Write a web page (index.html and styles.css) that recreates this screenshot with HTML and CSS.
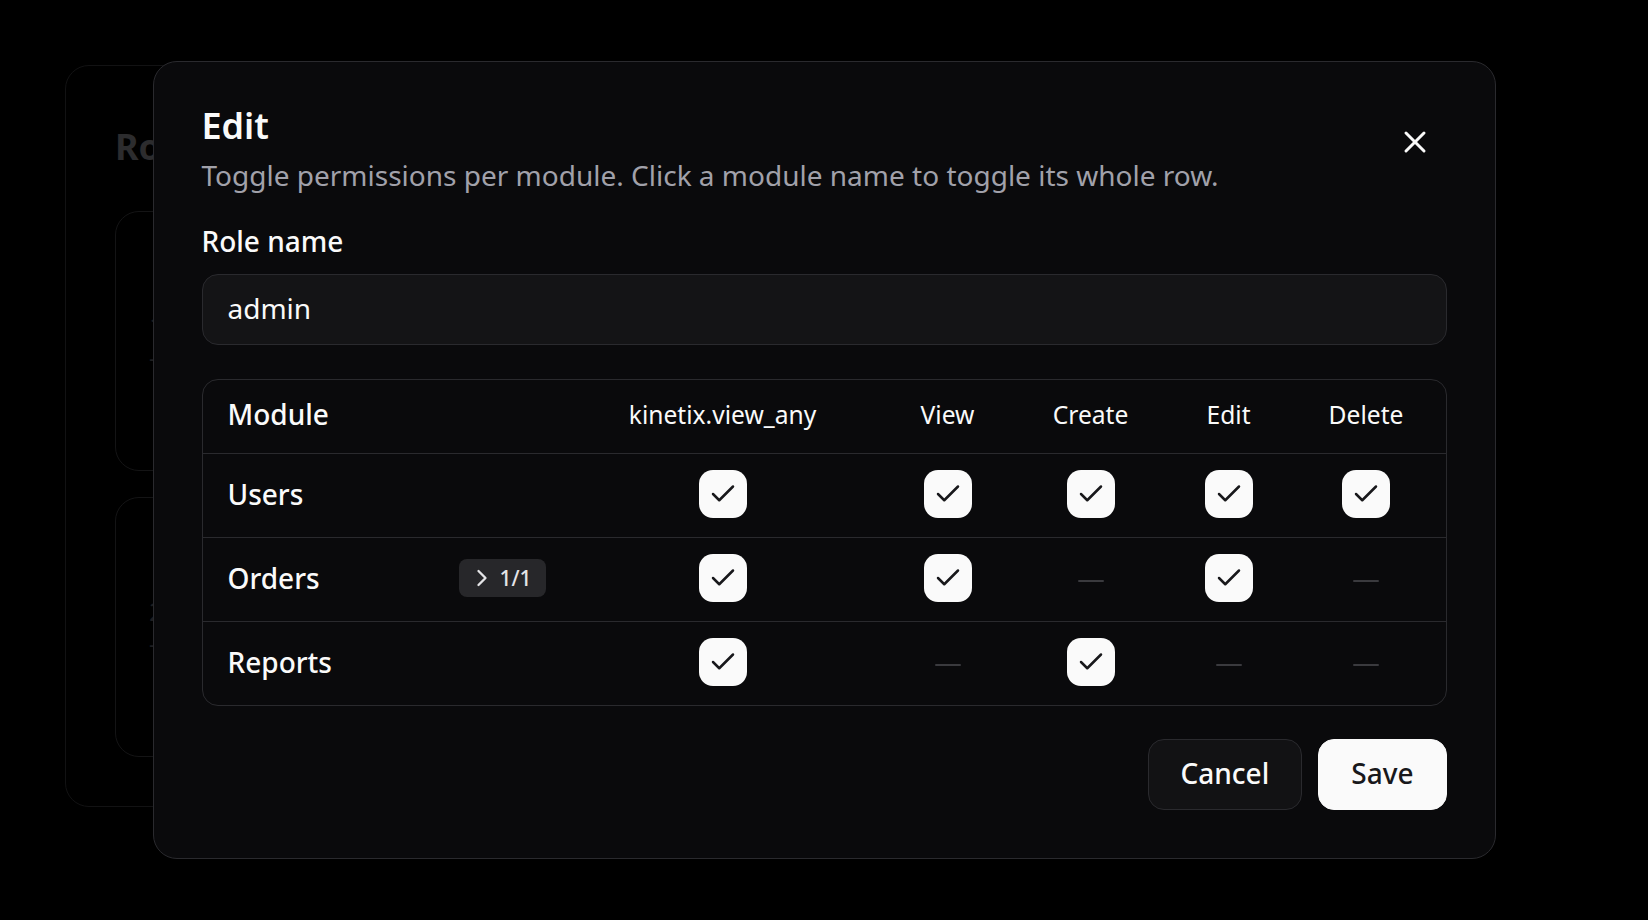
FILE: index.html
```html
<!doctype html>
<html>
	<head>
		<meta charset="UTF-8">
		<link rel="stylesheet" href="styles.css">
	</head>
	<body>
		<!-- page behind the dialog -->
		<div class="page">
			<div class="roles-card">
				<h1 class="roles-title">Roles</h1>
				<div class="role-card">
					<div class="role-count">1</div>
					<div class="role-meta">&ndash; admin</div>
				</div>
				<div class="role-card">
					<div class="role-count">2</div>
					<div class="role-meta">&ndash; editor</div>
				</div>
			</div>
		</div>

		<!-- Edit dialog -->
		<div class="overlay">
			<div class="dialog">
				<button class="close" type="button" aria-label="Close">
					<svg width="36" height="36" viewBox="0 0 24 24" fill="none" stroke="currentColor" stroke-width="2" stroke-linecap="round" stroke-linejoin="round"><path d="M18 6 6 18"/><path d="m6 6 12 12"/></svg>
				</button>

				<h2 class="title">Edit</h2>
				<p class="subtitle">Toggle permissions per module. Click a module name to toggle its whole row.</p>

				<label class="label" for="role_name">Role name</label>
				<input class="textbox" type="text" id="role_name" value="admin">

				<div class="perms">
					<div class="perm-row head">
						<div class="cell module">Module</div>
						<div class="cell">kinetix.view_any</div>
						<div class="cell">View</div>
						<div class="cell">Create</div>
						<div class="cell">Edit</div>
						<div class="cell">Delete</div>
					</div>
					<div class="perm-row">
						<div class="cell module">Users</div>
						<div class="cell"><span class="check"><svg width="30" height="30" viewBox="0 0 24 24" fill="none" stroke="currentColor" stroke-width="2" stroke-linecap="round" stroke-linejoin="round"><path d="M20 6 9 17l-5-5"/></svg></span></div>
						<div class="cell"><span class="check"><svg width="30" height="30" viewBox="0 0 24 24" fill="none" stroke="currentColor" stroke-width="2" stroke-linecap="round" stroke-linejoin="round"><path d="M20 6 9 17l-5-5"/></svg></span></div>
						<div class="cell"><span class="check"><svg width="30" height="30" viewBox="0 0 24 24" fill="none" stroke="currentColor" stroke-width="2" stroke-linecap="round" stroke-linejoin="round"><path d="M20 6 9 17l-5-5"/></svg></span></div>
						<div class="cell"><span class="check"><svg width="30" height="30" viewBox="0 0 24 24" fill="none" stroke="currentColor" stroke-width="2" stroke-linecap="round" stroke-linejoin="round"><path d="M20 6 9 17l-5-5"/></svg></span></div>
						<div class="cell"><span class="check"><svg width="30" height="30" viewBox="0 0 24 24" fill="none" stroke="currentColor" stroke-width="2" stroke-linecap="round" stroke-linejoin="round"><path d="M20 6 9 17l-5-5"/></svg></span></div>
					</div>
					<div class="perm-row">
						<div class="cell module">
							Orders
							<span class="badge"><svg width="28" height="28" viewBox="0 0 24 24" fill="none" stroke="currentColor" stroke-width="2" stroke-linecap="round" stroke-linejoin="round"><path d="m9 18 6-6-6-6"/></svg>1/1</span>
						</div>
						<div class="cell"><span class="check"><svg width="30" height="30" viewBox="0 0 24 24" fill="none" stroke="currentColor" stroke-width="2" stroke-linecap="round" stroke-linejoin="round"><path d="M20 6 9 17l-5-5"/></svg></span></div>
						<div class="cell"><span class="check"><svg width="30" height="30" viewBox="0 0 24 24" fill="none" stroke="currentColor" stroke-width="2" stroke-linecap="round" stroke-linejoin="round"><path d="M20 6 9 17l-5-5"/></svg></span></div>
						<div class="cell"><span class="dash"></span></div>
						<div class="cell"><span class="check"><svg width="30" height="30" viewBox="0 0 24 24" fill="none" stroke="currentColor" stroke-width="2" stroke-linecap="round" stroke-linejoin="round"><path d="M20 6 9 17l-5-5"/></svg></span></div>
						<div class="cell"><span class="dash"></span></div>
					</div>
					<div class="perm-row">
						<div class="cell module">Reports</div>
						<div class="cell"><span class="check"><svg width="30" height="30" viewBox="0 0 24 24" fill="none" stroke="currentColor" stroke-width="2" stroke-linecap="round" stroke-linejoin="round"><path d="M20 6 9 17l-5-5"/></svg></span></div>
						<div class="cell"><span class="dash"></span></div>
						<div class="cell"><span class="check"><svg width="30" height="30" viewBox="0 0 24 24" fill="none" stroke="currentColor" stroke-width="2" stroke-linecap="round" stroke-linejoin="round"><path d="M20 6 9 17l-5-5"/></svg></span></div>
						<div class="cell"><span class="dash"></span></div>
						<div class="cell"><span class="dash"></span></div>
					</div>
				</div>

				<div class="actions">
					<button class="button cancel" type="button">Cancel</button>
					<button class="button save" type="button">Save</button>
				</div>
			</div>
		</div>
	</body>
</html>
```

FILE: styles.css
```css
* {
	box-sizing: border-box;
}
body {
	margin: 0;
	height: 920px;
	overflow: hidden;
	background-color: #000;
	color: #fafafa;
	font-family: "Noto Sans", "DejaVu Sans", sans-serif;
}

/* page behind */
div.page {
	padding: 65px;
}
div.roles-card {
	width: 1200px;
	height: 742px;
	border: 1px solid #121213;
	border-radius: 24px;
	padding: 59px 49px 49px;
	display: flex;
	flex-direction: column;
	gap: 26px;
}
h1.roles-title {
	margin: 0 0 16px;
	font-size: 36px;
	line-height: 44px;
	font-weight: 700;
	color: #2c2c2e;
}
div.role-card {
	flex: 1;
	min-height: 0;
	border: 1px solid #141415;
	border-radius: 24px;
	padding: 98px 33px 0;
	color: #1e1e20;
	overflow: hidden;
}
div.role-count {
	font-size: 26px;
	line-height: 30px;
}
div.role-meta {
	margin-top: 2px;
	font-size: 22px;
	line-height: 30px;
}

/* dialog */
div.overlay {
	position: fixed;
	inset: 0;
	display: flex;
	align-items: center;
	justify-content: center;
}
div.dialog {
	position: relative;
	width: 1343px;
	background-color: #0a0a0c;
	border: 1px solid #2a2a2e;
	border-radius: 24px;
	padding: 48px;
}
button.close {
	position: absolute;
	top: 62px;
	right: 62px;
	width: 36px;
	height: 36px;
	padding: 0;
	border: none;
	background: none;
	color: #fafafa;
	cursor: pointer;
}
button.close svg {
	display: block;
}
h2.title {
	margin: 0;
	font-size: 36px;
	line-height: 32px;
	font-weight: 600;
}
p.subtitle {
	margin: 13px 0 0;
	font-size: 28px;
	line-height: 40px;
	color: #a1a1aa;
}
label.label {
	display: block;
	margin-top: 26px;
	font-size: 28px;
	line-height: 40px;
	font-weight: 500;
}
input.textbox {
	display: block;
	width: 100%;
	height: 71px;
	margin-top: 13px;
	padding: 0 24px 3px 25px;
	background-color: #141416;
	border: 1px solid #2a2a2e;
	border-radius: 16px;
	color: #fafafa;
	font-family: inherit;
	font-size: 28px;
	outline: none;
}

/* permission table */
div.perms {
	margin-top: 34px;
	border: 1px solid #2a2a2e;
	border-radius: 16px;
	overflow: hidden;
}
div.perm-row {
	display: grid;
	grid-template-columns: 358px 324px 126px 160px 116px 159px;
	height: 84px;
	padding-bottom: 3px;
	border-top: 1px solid #2a2a2e;
}
div.perm-row.head {
	height: 73px;
	padding-bottom: 5px;
	border-top: none;
	font-size: 24.6px;
}
div.cell {
	display: flex;
	align-items: center;
	justify-content: center;
}
div.cell.module {
	justify-content: space-between;
	padding: 0 15px 0 25px;
	font-size: 28px;
	font-weight: 500;
}
span.check {
	display: flex;
	align-items: center;
	justify-content: center;
	width: 48px;
	height: 48px;
	border-radius: 14px;
	background-color: #fafafa;
	color: #18181b;
}
span.dash {
	width: 26px;
	height: 2px;
	margin-top: 5px;
	border-radius: 1px;
	background-color: #3a3a3e;
}
span.badge {
	display: inline-flex;
	align-items: center;
	gap: 3px;
	height: 38px;
	padding: 0 14px 0 9px;
	border-radius: 8px;
	background-color: #27272a;
	color: #e4e4e7;
	font-size: 21px;
	font-weight: 500;
}

/* footer */
div.actions {
	display: flex;
	justify-content: flex-end;
	gap: 16px;
	margin-top: 33px;
}
button.button {
	height: 71px;
	padding: 0 32px 4px;
	border-radius: 16px;
	font-family: inherit;
	font-size: 28px;
	font-weight: 500;
	cursor: pointer;
}
button.cancel {
	background-color: #121214;
	border: 1px solid #2a2a2e;
	color: #fafafa;
}
button.save {
	background-color: #fafafa;
	border: 1px solid #fafafa;
	color: #18181b;
}
```
